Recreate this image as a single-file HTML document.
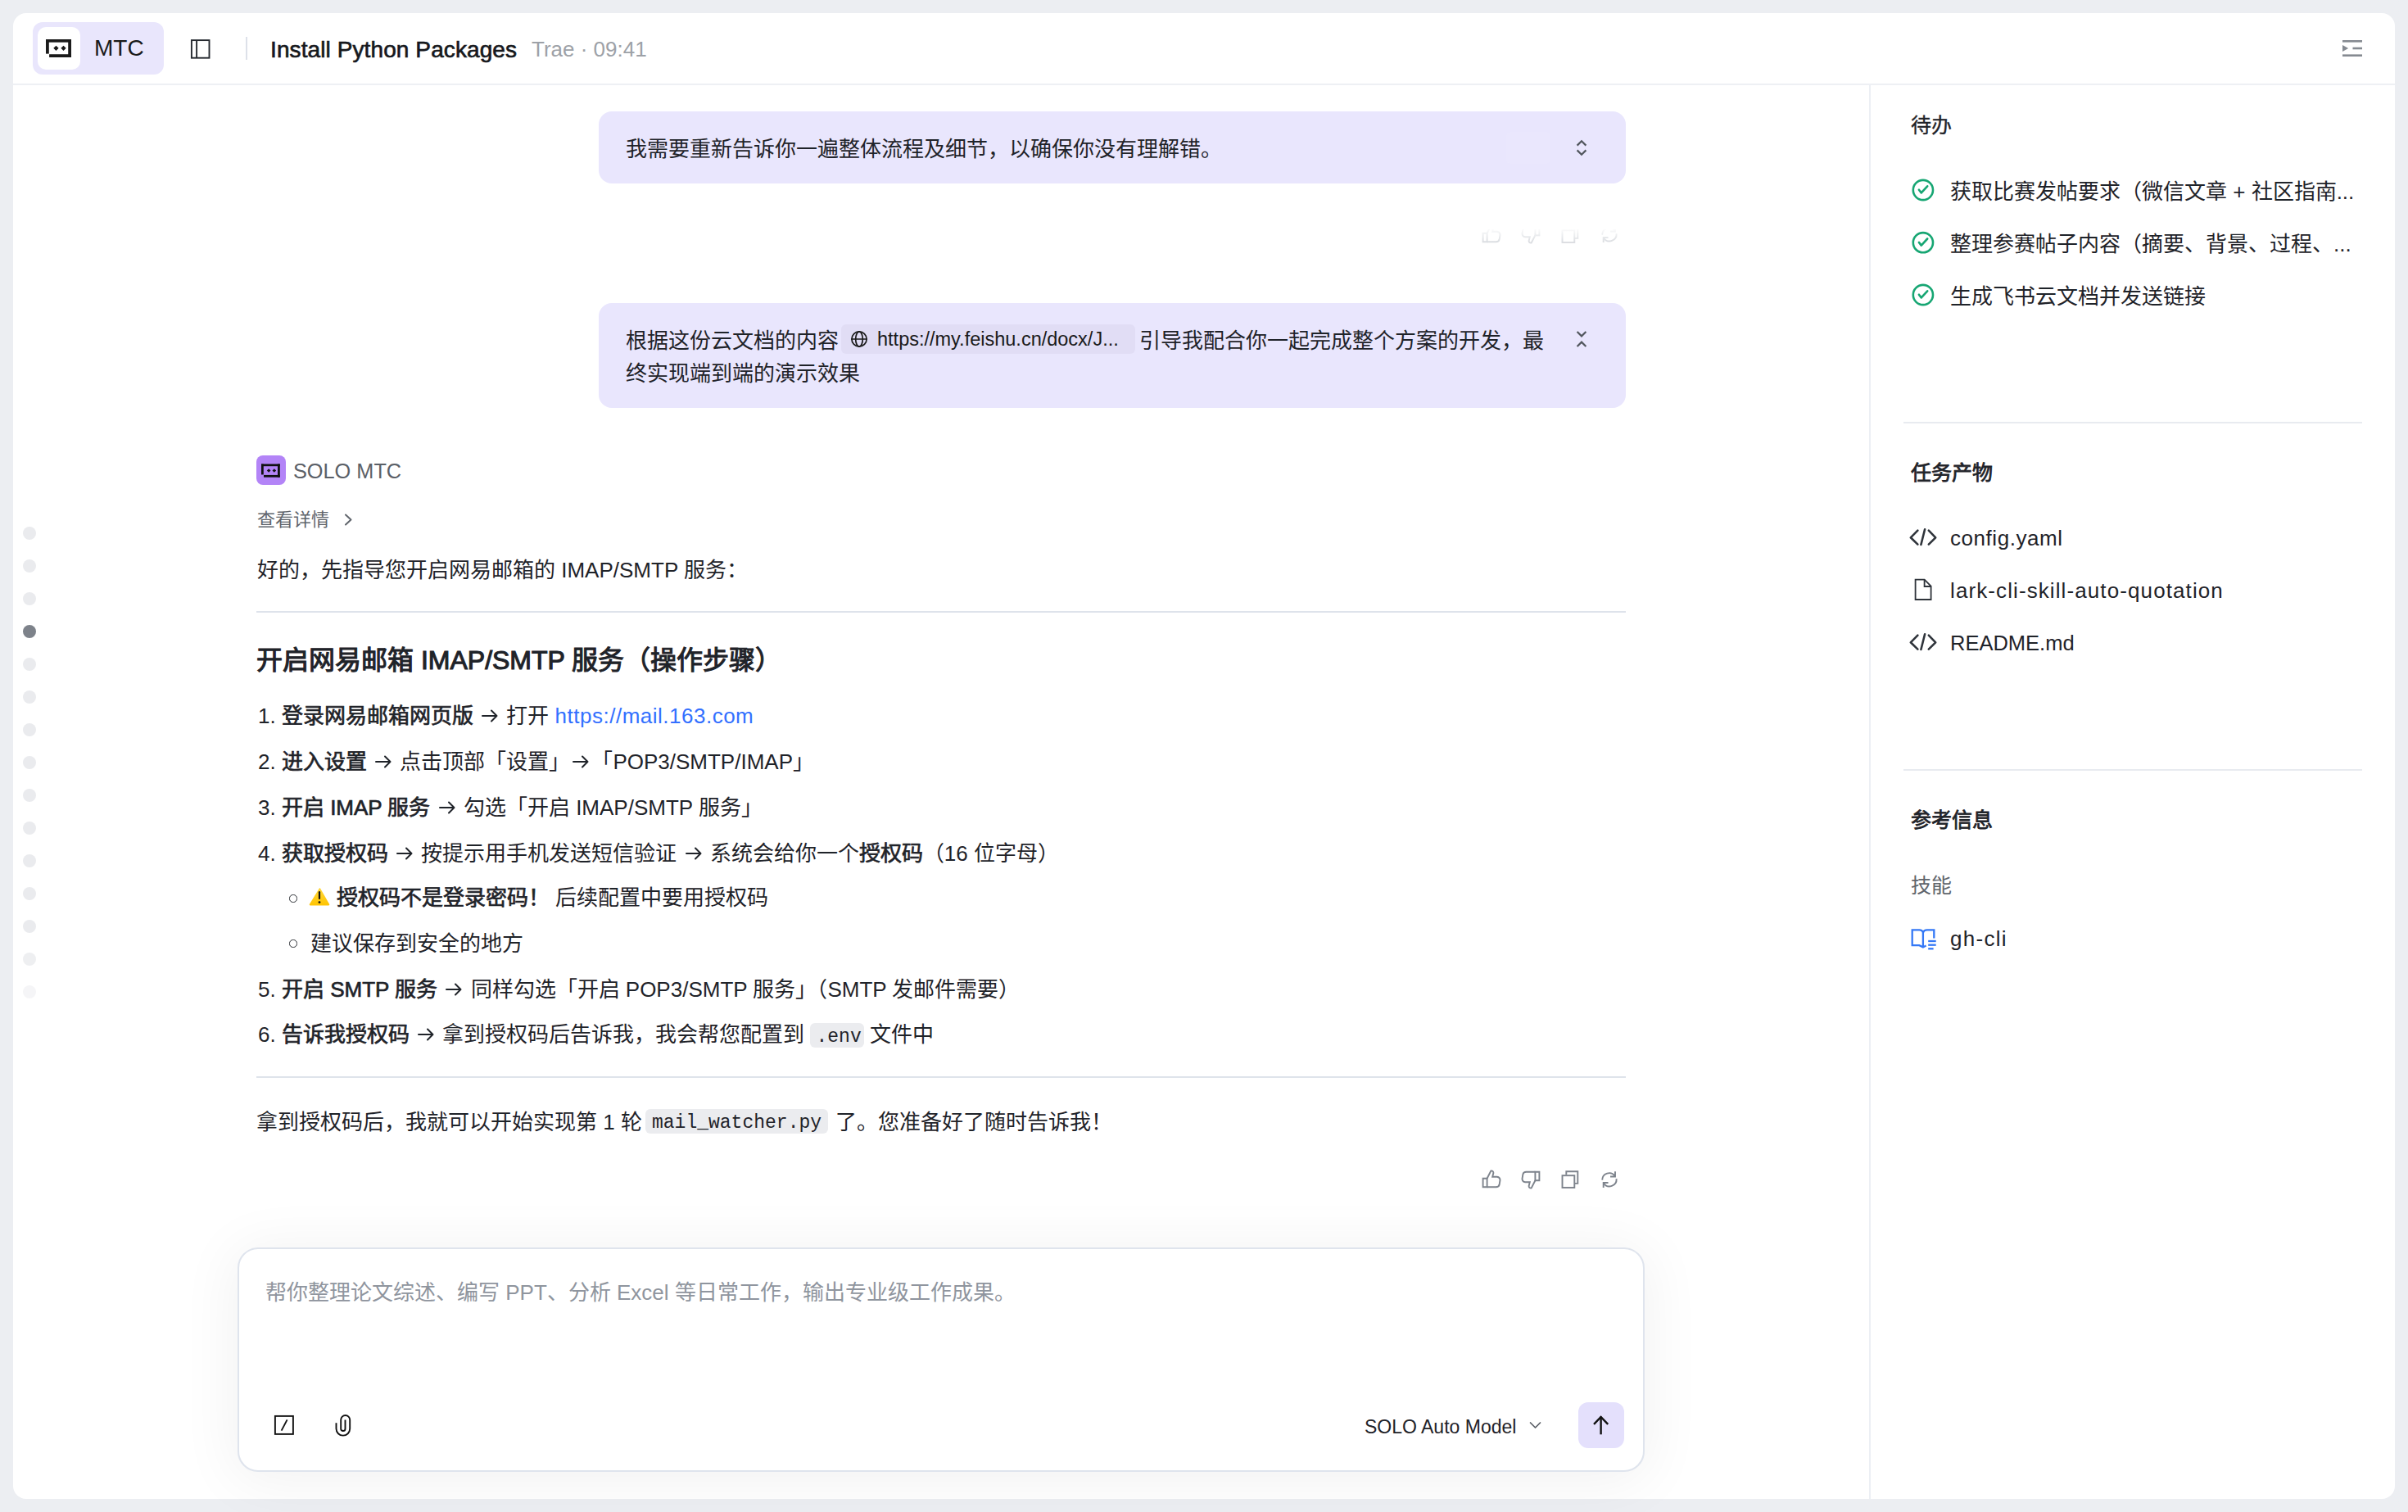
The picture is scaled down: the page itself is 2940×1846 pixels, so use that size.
<!DOCTYPE html>
<html lang="zh-CN"><head><meta charset="utf-8">
<style>
*{box-sizing:border-box;margin:0;padding:0}
html,body{width:2940px;height:1846px;overflow:hidden;background:#ECEEF2;font-family:"Liberation Sans",sans-serif;color:#1F2329}
.abs{position:absolute}
.card{position:absolute;left:16px;top:16px;width:2908px;height:1814px;background:#fff;border-radius:16px;overflow:hidden}
.t{position:absolute;white-space:pre;line-height:1}
svg{position:absolute;overflow:visible}
.bubble{position:absolute;left:731px;width:1254px;background:#E9E6FD;border-radius:16px}
.hr{position:absolute;height:2px;background:#DEE3EB}
.dot{position:absolute;left:28px;width:16px;height:16px;border-radius:50%;background:#EAEBEE}
.ar{display:inline-block;width:26px;height:26px;vertical-align:top;position:relative}
.ar svg{position:absolute;left:0;top:0}
b,.m{font-weight:400;-webkit-text-stroke:0.7px currentColor}
b.l{font-weight:bold}
.code{font-family:"Liberation Mono",monospace;background:#EBECEF;border-radius:6px}
</style></head>
<body>
<div class="card"></div>

<!-- header -->
<div class="abs" style="left:16px;top:102px;width:2908px;height:2px;background:#EEF0F4"></div>
<div class="abs" style="left:40px;top:27px;width:160px;height:64px;border-radius:12px;background:#E9E6FC"></div>
<div class="abs" style="left:46px;top:33px;width:52px;height:52px;border-radius:10px;background:#fff"></div>
<svg style="left:55.9px;top:48.2px" width="31" height="22" viewBox="0 0 30.4 21.6">
  <g fill="#1A1A1A"><rect x="0" y="0" width="30.4" height="3.6"/><rect x="0" y="0" width="3.7" height="17.3"/><rect x="26.7" y="0" width="3.7" height="21.6"/><rect x="4" y="17.9" width="26.4" height="3.7"/>
  <path d="M12.2 7.5 L15.3 10.6 L12.2 13.7 L9.1 10.6Z M21.1 7.5 L24.2 10.6 L21.1 13.7 L18 10.6Z"/></g>
</svg>
<div class="t" id="mtc" style="left:115px;top:45px;font-size:28px;color:#1A1A1A">MTC</div>
<svg style="left:232px;top:47px" width="25" height="25" viewBox="0 0 25 25">
  <g fill="none" stroke="#25292F" stroke-width="1.9"><rect x="1.9" y="2.1" width="21.6" height="21.6"/><line x1="8.1" y1="2.1" x2="8.1" y2="23.7"/></g>
</svg>
<div class="abs" style="left:300px;top:45px;width:2px;height:28px;background:#DDE1E9"></div>
<div class="t" id="title" style="left:330px;top:46.5px;font-size:28px;letter-spacing:0.1px;-webkit-text-stroke:0.65px #16181C;color:#16181C">Install Python Packages</div>
<div class="t" id="trae" style="left:649px;top:47px;font-size:26px;color:#9DA1A7">Trae · 09:41</div>
<svg style="left:2860px;top:49px" width="24" height="20" viewBox="0 0 24 20">
  <g fill="#858A91"><rect x="0" y="0" width="24" height="2.6"/><rect x="12.5" y="8.7" width="11.5" height="2.6"/><rect x="0" y="17.4" width="24" height="2.6"/><path d="M0 6 L7.2 10 L0 14Z"/></g>
</svg>


<!-- dots -->
<div class="dot" style="top:643px"></div><div class="dot" style="top:683px"></div><div class="dot" style="top:723px"></div>
<div class="dot" style="top:763px;background:#7D828A"></div>
<div class="dot" style="top:803px"></div><div class="dot" style="top:843px"></div><div class="dot" style="top:883px"></div><div class="dot" style="top:923px"></div><div class="dot" style="top:963px"></div><div class="dot" style="top:1003px"></div><div class="dot" style="top:1043px"></div><div class="dot" style="top:1083px"></div><div class="dot" style="top:1123px"></div><div class="dot" style="top:1163px;background:#EEEFF1"></div><div class="dot" style="top:1203px;background:#F5F5F7"></div>

<!-- bubble 1 -->
<div class="bubble" style="top:136px;height:88px"></div>
<div class="t" style="left:764px;top:169px;font-size:26px;color:#1F2329">我需要重新告诉你一遍整体流程及细节，以确保你没有理解错。</div>

<div class="abs" style="left:1839px;top:161px;width:54px;height:39px;border-radius:6px;background:rgba(255,255,255,0.07)"></div>
<!-- bubble 2 -->
<div class="bubble" style="top:370px;height:128px"></div>
<div class="t" style="left:764px;top:403px;font-size:26px;color:#1F2329">根据这份云文档的内容</div>
<div class="abs" style="left:1027px;top:396px;width:359px;height:35.5px;border-radius:6px;background:#E1DDF5"></div>
<div class="t" style="left:1071px;top:403px;font-size:23.5px;color:#1A1A1A">https://my.feishu.cn/docx/J...</div>
<div class="t" style="left:1391px;top:403px;font-size:26px;color:#1F2329">引导我配合你一起完成整个方案的开发，最</div>
<div class="t" style="left:764px;top:443px;font-size:26px;color:#1F2329">终实现端到端的演示效果</div>

<!-- assistant -->
<div class="abs" style="left:313px;top:556px;width:36px;height:36px;border-radius:8px;background:#B384F7"></div>
<div class="t" style="left:358px;top:562.5px;font-size:25.3px;color:#5B6067">SOLO MTC</div>
<div class="t" style="left:314px;top:624px;font-size:22px;color:#60656C">查看详情</div>
<div class="t" style="left:314px;top:683px;font-size:26px;color:#1F2329">好的，先指导您开启网易邮箱的 IMAP/SMTP 服务：</div>
<div class="hr" style="left:313px;top:746px;width:1672px"></div>
<div class="t" style="left:313px;top:790px;font-size:32px;font-weight:400;-webkit-text-stroke:1.1px #1F2329;color:#1F2329">开启网易邮箱 IMAP/SMTP 服务（操作步骤）</div>

<div class="t" style="left:315px;top:861px;font-size:26px;color:#1F2329">1. <b>登录网易邮箱网页版</b> <span class="ar"><svg width="26" height="26" viewBox="0 0 26 26"><path d="M4 13 H21.5 M15 6.5 L21.5 13 L15 19.5" stroke="currentColor" stroke-width="2" fill="none" stroke-linecap="round" stroke-linejoin="round"/></svg></span> 打开 <span style="color:#3370FF;letter-spacing:0.5px">https://mail.163.com</span></div>
<div class="t" style="left:315px;top:917px;font-size:26px;color:#1F2329">2. <b>进入设置</b> <span class="ar"><svg width="26" height="26" viewBox="0 0 26 26"><path d="M4 13 H21.5 M15 6.5 L21.5 13 L15 19.5" stroke="currentColor" stroke-width="2" fill="none" stroke-linecap="round" stroke-linejoin="round"/></svg></span> 点击顶部「设置」<span class="ar"><svg width="26" height="26" viewBox="0 0 26 26"><path d="M4 13 H21.5 M15 6.5 L21.5 13 L15 19.5" stroke="currentColor" stroke-width="2" fill="none" stroke-linecap="round" stroke-linejoin="round"/></svg></span>「POP3/SMTP/IMAP」</div>
<div class="t" style="left:315px;top:973px;font-size:26px;color:#1F2329">3. <b>开启 IMAP 服务</b> <span class="ar"><svg width="26" height="26" viewBox="0 0 26 26"><path d="M4 13 H21.5 M15 6.5 L21.5 13 L15 19.5" stroke="currentColor" stroke-width="2" fill="none" stroke-linecap="round" stroke-linejoin="round"/></svg></span> 勾选「开启 IMAP/SMTP 服务」</div>
<div class="t" style="left:315px;top:1029px;font-size:26px;color:#1F2329">4. <b>获取授权码</b> <span class="ar"><svg width="26" height="26" viewBox="0 0 26 26"><path d="M4 13 H21.5 M15 6.5 L21.5 13 L15 19.5" stroke="currentColor" stroke-width="2" fill="none" stroke-linecap="round" stroke-linejoin="round"/></svg></span> 按提示用手机发送短信验证 <span class="ar"><svg width="26" height="26" viewBox="0 0 26 26"><path d="M4 13 H21.5 M15 6.5 L21.5 13 L15 19.5" stroke="currentColor" stroke-width="2" fill="none" stroke-linecap="round" stroke-linejoin="round"/></svg></span> 系统会给你一个<b>授权码</b>（16 位字母）</div>
<div class="abs" style="left:353.3px;top:1092.2px;width:9.4px;height:9.4px;border-radius:50%;border:1.4px solid #2A2E33"></div>
<div class="t" style="left:411px;top:1083px;font-size:26px;color:#1F2329"><b>授权码不是登录密码！</b> 后续配置中要用授权码</div>
<div class="abs" style="left:353.3px;top:1147.3px;width:9.4px;height:9.4px;border-radius:50%;border:1.4px solid #2A2E33"></div>
<div class="t" style="left:379px;top:1139px;font-size:26px;color:#1F2329">建议保存到安全的地方</div>
<div class="t" style="left:315px;top:1195px;font-size:26px;color:#1F2329">5. <b>开启 SMTP 服务</b> <span class="ar"><svg width="26" height="26" viewBox="0 0 26 26"><path d="M4 13 H21.5 M15 6.5 L21.5 13 L15 19.5" stroke="currentColor" stroke-width="2" fill="none" stroke-linecap="round" stroke-linejoin="round"/></svg></span> 同样勾选「开启 POP3/SMTP 服务」（SMTP 发邮件需要）</div>
<div class="t" style="left:315px;top:1250px;font-size:26px;color:#1F2329">6. <b>告诉我授权码</b> <span class="ar"><svg width="26" height="26" viewBox="0 0 26 26"><path d="M4 13 H21.5 M15 6.5 L21.5 13 L15 19.5" stroke="currentColor" stroke-width="2" fill="none" stroke-linecap="round" stroke-linejoin="round"/></svg></span> 拿到授权码后告诉我，我会帮您配置到 </div>
<div class="abs code" style="left:989px;top:1249px;width:66px;height:30px"></div>
<div class="t" style="left:996.5px;top:1254.5px;font-size:23px;font-family:'Liberation Mono',monospace;color:#1F2329">.env</div>
<div class="t" style="left:1062px;top:1250px;font-size:26px;color:#1F2329">文件中</div>
<div class="hr" style="left:313px;top:1314px;width:1672px"></div>
<div class="t" style="left:313px;top:1357px;font-size:26px;color:#1F2329">拿到授权码后，我就可以开始实现第 1 轮 </div>
<div class="abs code" style="left:788px;top:1354px;width:223px;height:30px"></div>
<div class="t" style="left:796px;top:1359.5px;font-size:23px;font-family:'Liberation Mono',monospace;color:#1F2329">mail_watcher.py</div>
<div class="t" style="left:1020px;top:1357px;font-size:26px;color:#1F2329">了。您准备好了随时告诉我！</div>

<!-- input -->
<div class="abs" style="left:290px;top:1522.5px;width:1718px;height:274.5px;border-radius:25px;border:2px solid #DFE4ED;background:#fff;box-shadow:0 6px 70px 6px rgba(0,0,0,0.055)"></div>
<div class="t" style="left:324px;top:1565px;font-size:26px;color:#8F959E">帮你整理论文综述、编写 PPT、分析 Excel 等日常工作，输出专业级工作成果。</div>
<div class="t" style="left:1666px;top:1731px;font-size:23px;color:#1F2329">SOLO Auto Model</div>
<div class="abs" style="left:1927px;top:1712px;width:56px;height:56px;border-radius:12px;background:#E4E0FC"></div>

<!-- right panel divider -->
<div class="abs" style="left:2282px;top:104px;width:2px;height:1726px;background:#ECEFF4"></div>


<!-- right panel -->
<div class="t" style="left:2333px;top:141px;font-size:25px;color:#1F2329;-webkit-text-stroke:0.35px #1F2329">待办</div>
<div class="t" style="left:2381px;top:221px;font-size:26px;color:#1F2329">获取比赛发帖要求（微信文章 + 社区指南...</div>
<div class="t" style="left:2381px;top:285px;font-size:26px;color:#1F2329">整理参赛帖子内容（摘要、背景、过程、...</div>
<div class="t" style="left:2381px;top:349px;font-size:26px;color:#1F2329">生成飞书云文档并发送链接</div>
<div class="hr" style="left:2324px;top:515px;width:560px;background:#E8EBF0"></div>
<div class="t" style="left:2333px;top:565px;font-size:25px;color:#1F2329;-webkit-text-stroke:0.8px #1F2329">任务产物</div>
<div class="t" style="left:2381px;top:644px;font-size:26px;letter-spacing:0.55px;color:#1F2329">config.yaml</div>
<div class="t" style="left:2381px;top:708px;font-size:26px;letter-spacing:1.1px;color:#1F2329">lark-cli-skill-auto-quotation</div>
<div class="t" style="left:2381px;top:772.5px;font-size:25.5px;color:#1F2329">README.md</div>
<div class="hr" style="left:2324px;top:939px;width:560px;background:#E8EBF0"></div>
<div class="t" style="left:2333px;top:989px;font-size:25px;color:#1F2329;-webkit-text-stroke:0.8px #1F2329">参考信息</div>
<div class="t" style="left:2333px;top:1069px;font-size:25px;color:#60656C">技能</div>
<div class="t" style="left:2381px;top:1133px;font-size:26px;letter-spacing:1.3px;color:#1F2329">gh-cli</div>

<!-- icons overlay -->
<svg style="left:0;top:0" width="2940" height="1846" viewBox="0 0 2940 1846" fill="none" stroke-linecap="round" stroke-linejoin="round">
  <!-- bubble chevrons -->
  <g stroke="#51565D" stroke-width="2.2" stroke-linecap="butt" stroke-linejoin="miter">
    <polyline points="1925.6,177.6 1931,172.2 1936.4,177.6"/><polyline points="1925.6,183.4 1931,188.8 1936.4,183.4"/>
    <polyline points="1925.6,405 1931,410.4 1936.4,405"/><polyline points="1925.6,423 1931,417.6 1936.4,423"/>
  </g>
  <!-- globe -->
  <g stroke="#1A1A1A" stroke-width="1.7"><circle cx="1049" cy="414" r="9.1"/><ellipse cx="1049" cy="414" rx="4.3" ry="9.1"/><line x1="1040" y1="414" x2="1058" y2="414"/></g>
  <!-- chevron right 查看详情 -->
  <polyline points="422,628.5 428.5,634.5 422,640.5" stroke="#60656C" stroke-width="2"/>
  <!-- action icons -->
  <g stroke="#7D838C" stroke-width="1.9" stroke-linecap="butt" stroke-linejoin="miter">
    <path d="M1810.6 1438.8 H1815.6 V1449.3 H1810.6Z"/>
    <path d="M1815.6 1438.8 L1820.3 1429.5 Q1823.2 1429 1823.4 1432 L1822.2 1436.7 H1827.8 Q1831.6 1437.3 1831.5 1441 L1830.6 1446.3 Q1830 1449.3 1826.6 1449.3 H1815.6"/>
    <g transform="rotate(180 1845 1440)">
      <path d="M1810.6 1438.8 H1815.6 V1449.3 H1810.6Z"/>
      <path d="M1815.6 1438.8 L1820.3 1429.5 Q1823.2 1429 1823.4 1432 L1822.2 1436.7 H1827.8 Q1831.6 1437.3 1831.5 1441 L1830.6 1446.3 Q1830 1449.3 1826.6 1449.3 H1815.6"/>
    </g>
    <path d="M1912.3 1434.3 V1430.2 H1926.3 V1444.9 H1922.3"/>
    <rect x="1907.5" y="1435.2" width="14.8" height="14.8"/>
    <path d="M1956.2 1440.6 A8.6 8.6 0 0 1 1971.6 1435.6"/><path d="M1972 1430.2 V1436.5 H1966"/>
    <path d="M1973.6 1439.3 A8.6 8.6 0 0 1 1958 1444.8"/><path d="M1957.7 1450 V1444 H1963.5"/>
  </g>

  <!-- warning -->
  <defs><linearGradient id="wg" x1="0" y1="0" x2="0" y2="1"><stop offset="0" stop-color="#FFD83D"/><stop offset="1" stop-color="#FFC400"/></linearGradient>
  <linearGradient id="fade" x1="0" y1="0" x2="0" y2="1"><stop offset="0" stop-color="#fff" stop-opacity="0.95"/><stop offset="1" stop-color="#fff" stop-opacity="0"/></linearGradient></defs>
  <path d="M390 1084.2 Q390.3 1083.4 391 1084.6 L402.2 1104 Q402.6 1105.4 401.2 1105.6 H378.8 Q377.4 1105.4 377.8 1104 Z" fill="url(#wg)" stroke="none"/>
  <line x1="390" y1="1089.2" x2="390" y2="1097" stroke="#111" stroke-width="2.2" stroke-linecap="round"/>
  <circle cx="390" cy="1101.6" r="1.4" fill="#111" stroke="none"/>

  <!-- ghost action icons -->
  <g transform="translate(0 -1154)" stroke="#D3D6DB" stroke-width="1.9" stroke-linecap="butt" stroke-linejoin="miter" opacity="0.8">
    <path d="M1810.6 1438.8 H1815.6 V1449.3 H1810.6Z"/>
    <path d="M1815.6 1438.8 L1820.3 1429.5 Q1823.2 1429 1823.4 1432 L1822.2 1436.7 H1827.8 Q1831.6 1437.3 1831.5 1441 L1830.6 1446.3 Q1830 1449.3 1826.6 1449.3 H1815.6"/>
    <g transform="rotate(180 1845 1440)">
      <path d="M1810.6 1438.8 H1815.6 V1449.3 H1810.6Z"/>
      <path d="M1815.6 1438.8 L1820.3 1429.5 Q1823.2 1429 1823.4 1432 L1822.2 1436.7 H1827.8 Q1831.6 1437.3 1831.5 1441 L1830.6 1446.3 Q1830 1449.3 1826.6 1449.3 H1815.6"/>
    </g>
    <path d="M1912.3 1434.3 V1430.2 H1926.3 V1444.9 H1922.3"/>
    <rect x="1907.5" y="1435.2" width="14.8" height="14.8"/>
    <path d="M1956.2 1440.6 A8.6 8.6 0 0 1 1971.6 1435.6"/><path d="M1972 1430.2 V1436.5 H1966"/>
    <path d="M1973.6 1439.3 A8.6 8.6 0 0 1 1958 1444.8"/><path d="M1957.7 1450 V1444 H1963.5"/>
  </g>
  <rect x="1790" y="279" width="200" height="16" fill="url(#fade)" stroke="none"/>
  <rect x="1790" y="250" width="200" height="29.5" fill="#fff" stroke="none"/>
  <!-- input icons -->
  <g stroke="#111" stroke-width="1.9" stroke-linecap="butt" stroke-linejoin="miter">
    <rect x="335.9" y="1728.9" width="22" height="22"/>
    <line x1="350.6" y1="1733.4" x2="343.6" y2="1746.6"/>
  </g>
  <path d="M410.5 1737.2 V1744.3 A8.35 8.35 0 0 0 427.2 1744.3 V1733.5 A5.5 5.5 0 0 0 416.2 1733.5 V1744.4 A2.65 2.65 0 0 0 421.5 1744.4 V1733.4" stroke="#111" stroke-width="1.9" stroke-linecap="butt"/>
  <polyline points="1868.5,1737 1874.5,1743 1880.5,1737" stroke="#5A5F66" stroke-width="1.7"/>
  <g stroke="#111" stroke-width="2.4" stroke-linecap="butt"><line x1="1954.6" y1="1729.5" x2="1954.6" y2="1751.3"/><polyline points="1946,1738.8 1954.6,1730 1963.2,1738.8" stroke-linejoin="miter"/></g>
  <!-- check icons -->
  <g stroke="#17A673" stroke-width="2.6">
    <circle cx="2347.9" cy="232" r="12.1"/><polyline points="2342.9,231.7 2345.8,235.4 2353.2,227.3"/>
    <circle cx="2347.9" cy="296.2" r="12.1"/><polyline points="2342.9,295.9 2345.8,299.6 2353.2,291.5"/>
    <circle cx="2347.9" cy="360" r="12.1"/><polyline points="2342.9,359.7 2345.8,363.4 2353.2,355.3"/>
  </g>
  <!-- code/file icons -->
  <g stroke="#2F343B" stroke-width="2.6">
    <polyline points="2341.4,647.7 2332.8,656.3 2341.4,664.6"/><line x1="2350.1" y1="646.2" x2="2345.4" y2="665"/><polyline points="2354.8,647.7 2363.2,656.3 2354.8,664.6"/>
    <polyline points="2341.4,775.7 2332.8,784.3 2341.4,792.6"/><line x1="2350.1" y1="774.2" x2="2345.4" y2="793"/><polyline points="2354.8,775.7 2363.2,784.3 2354.8,792.6"/>
  </g>
  <g stroke="#2F343B" stroke-width="1.8" stroke-linejoin="miter" stroke-linecap="butt">
    <path d="M2338.6 707.6 H2349.6 L2357.6 715.6 V732 H2338.6Z"/><path d="M2349.6 707.6 V716 H2357.6"/>
  </g>
  <!-- book icon -->
  <g stroke="#3478F6" stroke-width="2.3" stroke-linecap="butt" stroke-linejoin="miter">
    <path d="M2347.9 1157 V1138.5 Q2347 1135.4 2343.5 1135.4 H2334.7 V1154.2 H2343.3 L2347.9 1156.4 L2351.6 1154.4"/>
    <path d="M2347.9 1138.5 Q2349 1135.4 2352.8 1135.4 H2361.3 V1145.6"/>
    <line x1="2354.2" y1="1149" x2="2363.7" y2="1149"/><line x1="2354.2" y1="1153.7" x2="2363.7" y2="1153.7"/><line x1="2354.2" y1="1158.3" x2="2360.6" y2="1158.3"/>
  </g>
  <!-- avatar logo -->
  <g fill="#111" transform="translate(319 566.5) scale(0.75)">
    <rect x="0" y="0" width="30.4" height="3.6"/><rect x="0" y="0" width="3.7" height="17.3"/><rect x="26.7" y="0" width="3.7" height="21.6"/><rect x="4" y="17.9" width="26.4" height="3.7"/>
    <path d="M12.2 7.5 L15.3 10.6 L12.2 13.7 L9.1 10.6Z M21.1 7.5 L24.2 10.6 L21.1 13.7 L18 10.6Z"/>
  </g>
</svg>

</body></html>
